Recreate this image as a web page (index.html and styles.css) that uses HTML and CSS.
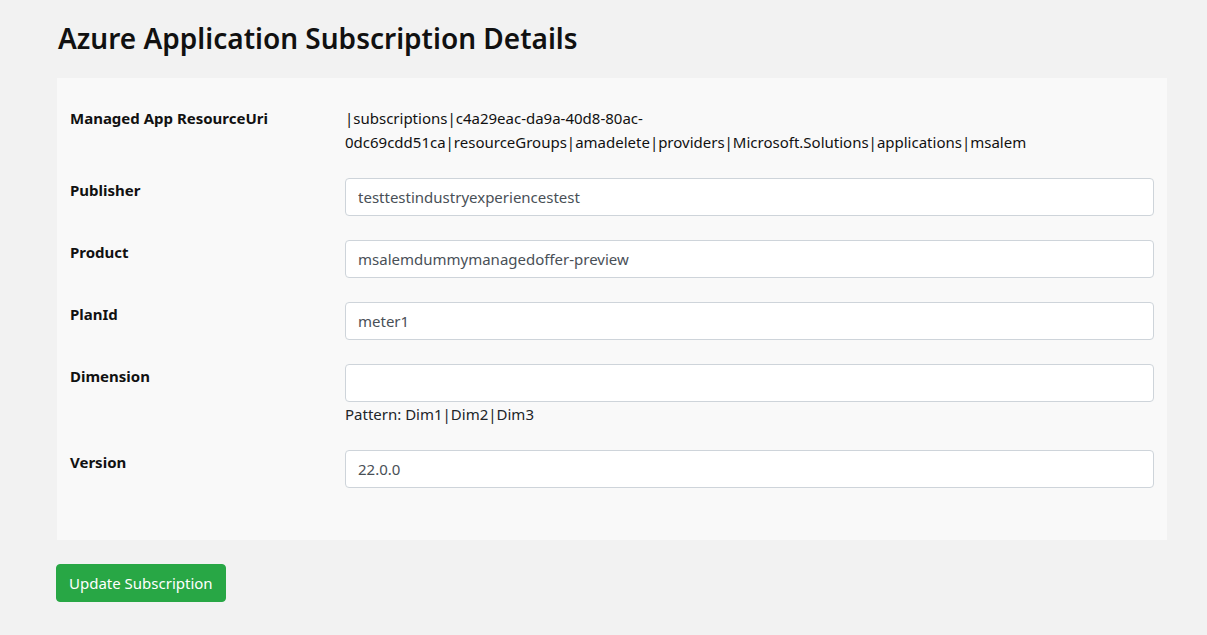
FILE: index.html
```html
<!DOCTYPE html>
<html lang="en">
<head>
<meta charset="utf-8">
<title>Azure Application Subscription Details</title>
<link rel="stylesheet" href="styles.css">
</head>
<body>
<main class="page">
  <h1 class="title">Azure Application Subscription Details</h1>
  <form class="panel">
    <div class="row">
      <label class="label">Managed App ResourceUri</label>
      <div class="value uri">|subscriptions|c4a29eac-da9a-40d8-80ac-0dc69cdd51ca|resourceGroups|amadelete|providers|Microsoft.Solutions|applications|msalem</div>
    </div>
    <div class="row">
      <label class="label" for="publisher">Publisher</label>
      <div class="value"><input class="input" id="publisher" type="text" value="testtestindustryexperiencestest"></div>
    </div>
    <div class="row">
      <label class="label" for="product">Product</label>
      <div class="value"><input class="input" id="product" type="text" value="msalemdummymanagedoffer-preview"></div>
    </div>
    <div class="row">
      <label class="label" for="plan">PlanId</label>
      <div class="value"><input class="input" id="plan" type="text" value="meter1"></div>
    </div>
    <div class="row">
      <label class="label" for="dimension">Dimension</label>
      <div class="value">
        <input class="input" id="dimension" type="text" value="">
        <div class="hint">Pattern: Dim1|Dim2|Dim3</div>
      </div>
    </div>
    <div class="row">
      <label class="label" for="version">Version</label>
      <div class="value"><input class="input" id="version" type="text" value="22.0.0"></div>
    </div>
  </form>
  <button class="btn" type="button">Update Subscription</button>
</main>
</body>
</html>
```

FILE: styles.css
```css
html, body {
  margin: 0;
  padding: 0;
  background: #f2f2f2;
}

body {
  font-family: "Noto Sans", "Open Sans", sans-serif;
  font-size: 15px;
  line-height: 24px;
  color: #212529;
}

.page {
  width: 1110px;
  padding-left: 57px;
}

.title {
  font-size: 28px;
  line-height: 34px;
  font-weight: 600;
  color: #111;
  margin: 21px 0 23px 1px;
}

.panel {
  background: #f9f9f9;
  padding: 28px 13px 28px 13px;
}

.row {
  display: grid;
  grid-template-columns: 275px 1fr;
  margin-bottom: 24px;
}

.label {
  font-weight: 700;
  color: #111;
}

.uri {
  overflow-wrap: anywhere;
  color: #111;
}

.input {
  display: block;
  box-sizing: border-box;
  width: 100%;
  height: 38px;
  padding: 6px 12px;
  border: 1px solid #ced4da;
  border-radius: 4px;
  background: #fff;
  font: inherit;
  color: #495057;
  outline: none;
}

.hint {
  color: #212529;
}

.btn {
  margin-top: 24px;
  margin-left: -1px;
  height: 38px;
  padding: 6px 12px;
  border: 1px solid #28a745;
  border-radius: 4px;
  background: #28a745;
  color: #fff;
  font: inherit;
  cursor: pointer;
}
```
